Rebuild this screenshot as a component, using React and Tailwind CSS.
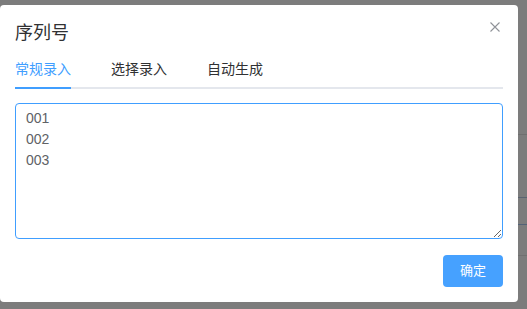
import React from 'react';

const tabs = ['常规录入', '选择录入', '自动生成'];

export default function App() {
  return (
    <div
      className="flex items-start w-[527px] h-[309px] overflow-hidden bg-[#7c7c7c]"
      style={{ fontFamily: '"Liberation Sans", "Noto Sans CJK SC", sans-serif' }}
    >
      {/* 对话框 */}
      <div className="mt-[5px] w-[518px] h-[297px] shrink-0 bg-white rounded-[4px] px-[15px]">
        <div className="flex justify-between items-start h-[44px]">
          <div className="pt-[16px] text-[18px] leading-[24px] text-[#303133]">序列号</div>
          <button className="mt-[17px] mr-[3px] w-[10px] h-[10px] text-[#909399]">
            <svg viewBox="0 0 10 10" className="w-[10px] h-[10px]" fill="none" stroke="currentColor" strokeWidth="1.1">
              <path d="M0.5 0.5L9.5 9.5M9.5 0.5L0.5 9.5" />
            </svg>
          </button>
        </div>

        {/* 标签页 */}
        <div className="flex gap-[40px] h-[40px] border-b-2 border-[#e4e7ed]">
          {tabs.map((t, i) => (
            <div
              key={t}
              className={`h-[40px] -mb-[2px] leading-[40px] text-[14px] border-b-2 ${i === 0 ? 'text-[#409eff] border-[#409eff]' : 'text-[#303133] border-transparent'}`}
            >
              {t}
            </div>
          ))}
        </div>

        {/* 输入框 */}
        <textarea
          readOnly
          defaultValue={'001\n002\n003'}
          className="block mt-[14px] w-full h-[136px] border border-[#409eff] rounded-[4px] px-[10px] py-[4px] text-[14px] leading-[21px] text-[#606266] outline-none"
        />

        <div className="flex justify-end mt-[16px]">
          <button className="w-[60px] h-[32px] rounded-[4px] bg-[#46a1ff] text-white text-[13px]">确定</button>
        </div>
      </div>

      {/* 遮罩后面页面的表格行 */}
      <div className="flex flex-col flex-1">
        <div className="h-[134px]" />
        <div className="h-[63px] border-t border-[#6f6f6f]" />
        <div className="h-[27px] border-t border-[#5a6370]" />
        <div className="h-[31px] border-t border-[#536277]" />
        <div className="border-t border-[#707070]" />
      </div>
    </div>
  );
}
